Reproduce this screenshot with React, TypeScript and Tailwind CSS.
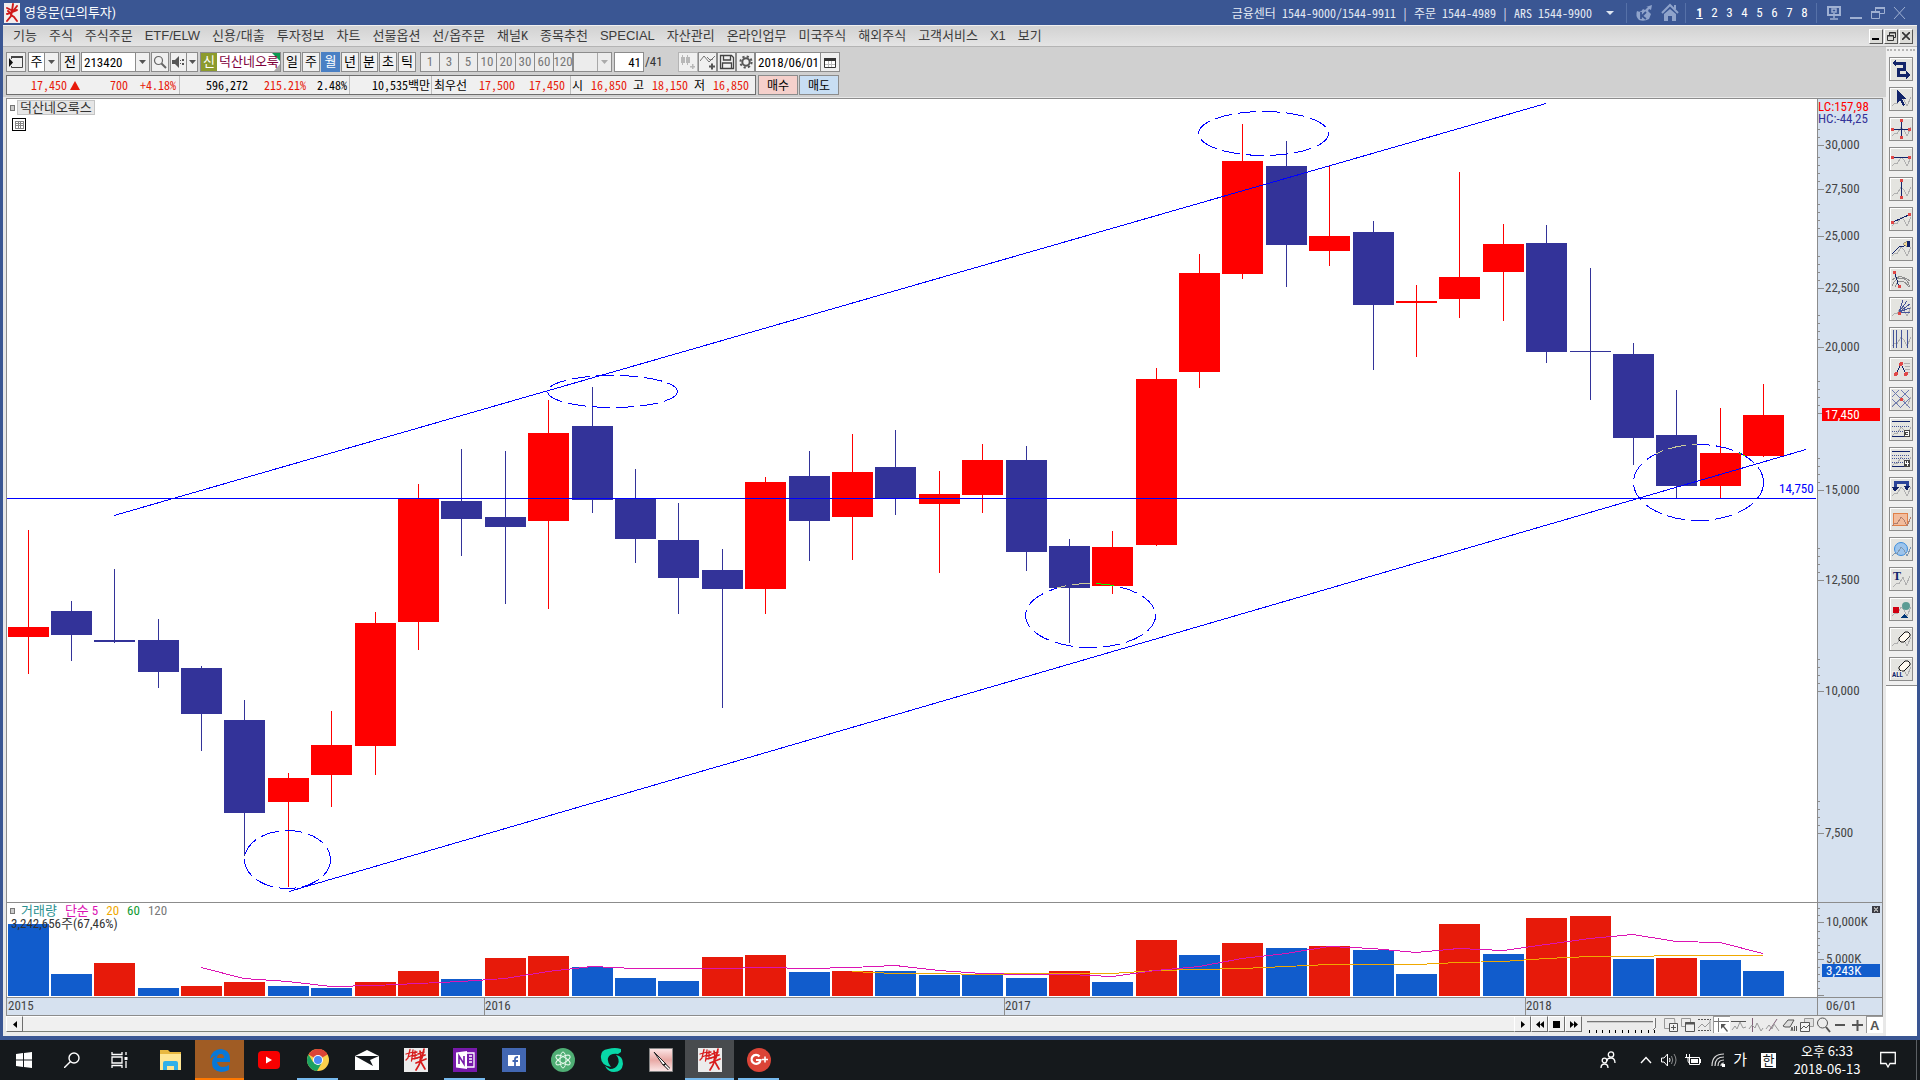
import React from "react";

type Candle = [up: number, high: number, low: number, top: number, bottom: number, volumeTop: number];

const CANDLES: Candle[] = [
  [1, 530, 674, 627, 637, 924], [0, 601, 661, 611, 635, 974], [0, 569, 643, 640, 642, 963],
  [0, 619, 688, 640, 672, 988], [0, 666, 751, 668, 714, 986], [0, 700, 856, 720, 813, 982],
  [1, 773, 887, 778, 802, 986], [1, 711, 807, 745, 775, 988], [1, 612, 775, 623, 746, 982],
  [1, 484, 650, 499, 622, 971], [0, 449, 556, 501, 519, 979], [0, 451, 604, 517, 527, 958],
  [1, 400, 609, 433, 521, 956], [0, 387, 513, 426, 500, 967], [0, 469, 563, 498, 539, 978],
  [0, 503, 614, 540, 578, 981], [0, 549, 708, 570, 589, 957], [1, 477, 614, 482, 589, 955],
  [0, 451, 561, 476, 521, 972], [1, 434, 560, 472, 517, 971], [0, 430, 515, 467, 498, 971],
  [1, 471, 573, 494, 504, 975], [1, 444, 513, 460, 495, 975], [0, 446, 571, 460, 552, 978],
  [0, 539, 643, 546, 588, 971], [1, 531, 594, 547, 586, 982], [1, 368, 546, 379, 545, 940],
  [1, 254, 388, 273, 372, 955], [1, 124, 279, 161, 274, 943], [0, 141, 287, 166, 245, 948],
  [1, 166, 266, 236, 251, 946], [0, 221, 370, 232, 305, 950], [1, 285, 357, 301, 303, 974],
  [1, 172, 318, 277, 299, 924], [1, 224, 321, 244, 272, 954], [0, 225, 363, 243, 352, 918],
  [0, 268, 400, 351, 352, 916], [0, 343, 465, 354, 438, 959], [0, 390, 498, 435, 486, 958],
  [1, 408, 498, 453, 486, 960], [1, 384, 457, 415, 456, 971],
];
const VOLUME_UP = [2, 4, 5, 8, 9, 11, 12, 16, 17, 19, 24, 26, 28, 30, 33, 35, 36, 38];

const centerX = (i: number) => Math.floor(28.04 + 43.39 * i);
const toPoints = (start: number, ys: number[]) => ys.map((y, k) => `${centerX(start + k)},${y + 0.5}`).join(" ");

const MA5 = toPoints(4, [967, 978, 981, 986, 985, 983, 981, 978, 971, 966, 968, 968, 968, 967, 968, 967, 965, 970, 973, 974, 974, 976, 970, 966, 958, 953, 946, 948, 952, 948, 950, 944, 938, 934, 941, 942, 953]);
const MA20 = toPoints(19, [971, 973, 973, 974, 973, 973, 973, 970, 969, 968, 966, 964, 964, 964, 962, 961, 958, 956, 956, 955, 955, 955]);

const ELLIPSES = [
  [287, 859, 43, 29], [612, 391, 65, 16], [1263, 133, 65, 22], [1090, 615, 65, 32], [1698, 482, 65, 38],
];

const PRICE_TICKS: [number, string][] = [
  [145, "30,000"], [189, "27,500"], [236, "25,000"], [288, "22,500"], [347, "20,000"],
  [413, "17,500"], [490, "15,000"], [580, "12,500"], [691, "10,000"], [833, "7,500"],
];

function Ellipses({ color, clip }: { color: string; clip?: string }) {
  return (
    <g fill="none" stroke={color} strokeDasharray="18 6" clipPath={clip}>
      {ELLIPSES.map(([cx, cy, rx, ry]) => (
        <ellipse key={cx} cx={cx + 0.5} cy={cy + 0.5} rx={rx} ry={ry} />
      ))}
    </g>
  );
}

function PricePlot() {
  return (
    <svg className="block h-full w-full" viewBox="7 99 1810 803" preserveAspectRatio="none" shapeRendering="crispEdges" role="img" aria-label="월봉 차트">
      <defs>
        {[0, 1].map((up) => (
          <clipPath key={up} id={up ? "bodies-up" : "bodies-down"}>
            {CANDLES.map((c, i) => c[0] === up && <rect key={i} x={centerX(i) - 20} y={c[3]} width="41" height={c[4] - c[3]} />)}
          </clipPath>
        ))}
      </defs>
      {CANDLES.map(([up, high, low, top, bottom], i) => (
        <g key={i} fill={up ? "#ff0000" : "#333399"}>
          <rect x={centerX(i)} y={high} width="1" height={low - high} />
          <rect x={centerX(i) - 20} y={top} width="41" height={bottom - top} />
        </g>
      ))}
      <Ellipses color="#0000ff" />
      <Ellipses color="#cccc99" clip="url(#bodies-down)" />
      <Ellipses color="#00ff00" clip="url(#bodies-up)" />
      <path d="M114 515.5L1546 103.5M289 891.5L1806 449.5M7 498.5H1816" stroke="#0000ff" fill="none" />
      <text x="1779" y="493" fontSize="13" fill="#0000ff">14,750</text>
    </svg>
  );
}

function PriceAxis() {
  return (
    <svg className="block h-full w-full" viewBox="1818 99 64 803" preserveAspectRatio="none" shapeRendering="crispEdges" fontSize="13">
      <text x="1818" y="111" fill="#ff0000">LC:157,98</text>
      <text x="1818" y="123" fill="#333399">HC:-44,25</text>
      {PRICE_TICKS.map(([y, label]) => (
        <g key={label}>
          <rect x="1818" y={y} width="6" height="1" fill="#8c8c8c" />
          {[8, 16, 24, 32].map((d) => y - d > 126 && <rect key={d} x="1818" y={y - d} width="2" height="1" fill="#8c8c8c" />)}
          <text x="1825" y={y + 4} fill="#444">{label}</text>
        </g>
      ))}
      <rect x="1822" y="408" width="58" height="13" fill="#ff0000" />
      <text x="1825" y="419" fill="#fff">17,450</text>
    </svg>
  );
}

function VolumePlot() {
  return (
    <svg className="block h-full w-full" viewBox="7 903 1810 94" preserveAspectRatio="none" shapeRendering="crispEdges" role="img" aria-label="거래량">
      {CANDLES.map((c, i) => (
        <rect key={i} x={centerX(i) - 20} y={c[5]} width="41" height={996 - c[5]} fill={VOLUME_UP.includes(i) ? "#e71a0a" : "#115ccc"} />
      ))}
      <polyline points={MA20} fill="none" stroke="#f0a800" />
      <polyline points={MA5} fill="none" stroke="#dc14b4" />
    </svg>
  );
}

function VolumeAxis() {
  return (
    <svg className="block h-full w-full" viewBox="1818 903 64 94" preserveAspectRatio="none" shapeRendering="crispEdges" fontSize="13">
      {[908, 915, 931, 938, 945, 952, 967, 974, 981, 988].map((y) => <rect key={y} x="1818" y={y} width="2" height="1" fill="#8c8c8c" />)}
      {[922, 959, 995].map((y) => <rect key={y} x="1818" y={y} width="6" height="1" fill="#8c8c8c" />)}
      <text x="1826" y="926" fill="#444">10,000K</text>
      <text x="1826" y="963" fill="#444">5,000K</text>
      <rect x="1822" y="964" width="58" height="13" fill="#115ccc" />
      <text x="1826" y="975" fill="#fff">3,243K</text>
      <rect x="1872" y="906" width="8" height="7" fill="#3c3c44" />
      <path d="M1874 907.500l4 4m0-4l-4 4" stroke="#aaa" />
    </svg>
  );
}

function DatePlot() {
  return (
    <svg className="block h-full w-full" viewBox="7 998 1810 17" preserveAspectRatio="none" shapeRendering="crispEdges" fontSize="13" fill="#444">
      {[484, 1004, 1525].map((x) => <rect key={x} x={x} y="998" width="1" height="17" fill="#8c8c8c" />)}
      <text x="8" y="1010">2015</text>
      <text x="485" y="1010">2016</text>
      <text x="1005" y="1010">2017</text>
      <text x="1526" y="1010">2018</text>
    </svg>
  );
}

/* ---------- title bar ---------- */

function BrushMark({ className }: { className: string }) {
  return (
    <svg className={className} viewBox="0 0 24 24" fill="none" stroke="#d81c1c" strokeLinecap="round">
      <rect width="24" height="24" fill="#ececec" stroke="none" />
      <path d="M2 6l7-2M6 1.500L4 10l-2 2M4 9l5-2M9 2L7.500 13M9 5l4-1M9 8l4-1M8 11l5-1M11 3v8" strokeWidth="1.300" />
      <path d="M14 6l6-2M16 3l1 5M20 1l-2 9M13 10l8-3M17 7l-1 6M12 15l10-4M17 11l-2 6-3 5M17 14l4 7" strokeWidth="1.700" />
    </svg>
  );
}

function RedFigure() {
  return (
    <svg className="h-5 w-4" viewBox="0 0 16 20" fill="none" stroke="#d01818" strokeLinecap="round">
      <rect width="16" height="20" fill="#f2eeee" stroke="none" />
      <path d="M9 1L8 8M3 5l4 2M13 3l-3 4M3 11l10-4M8 8l-1 5-4 5M7 12l3 2 3 4M4 8l3 3" strokeWidth="1.900" />
    </svg>
  );
}

function TitleBar() {
  return (
    <header className="flex h-[25px] items-center pl-1 text-[#e4eaf4]">
      <RedFigure />
      <h1 className="ml-1 text-[13px] leading-5 text-white">영웅문(모의투자)</h1>
      <p className="ml-auto font-['Noto_Sans_Mono_CJK_KR',monospace] text-xs whitespace-pre">금융센터 1544-9000/1544-9911 | 주문 1544-4989 | ARS 1544-9900</p>
      <button aria-label="연락처" className="ml-[6px] flex h-6 w-6 items-center justify-center">
        <svg className="h-1 w-2" viewBox="0 0 8 4"><path d="M0 0h8L4 4z" fill="#dfe6f2" /></svg>
      </button>
      <span className="ml-1 h-5 w-px bg-[#5671a8]" />
      <button aria-label="키움" className="ml-2">
        <svg className="h-5 w-[18px]" viewBox="0 0 18 20" fill="#8fa3cb"><path d="M2 8q4 2 6-2l2 1 3-3h-2l6-2-1 5-2-1-1 2 3 3-2 5q-5 3-10 1-4-4-2-9z" /><path d="M6 9v7M11 9l-4 4 4 3" stroke="#3a5693" strokeWidth="1.800" fill="none" /></svg>
      </button>
      <button aria-label="홈" className="ml-2">
        <svg className="h-5 w-[18px]" viewBox="0 0 18 20" fill="none" stroke="#8fa3cb"><path d="M1 10L9 2l8 8" strokeWidth="2" /><path d="M9 6l6 5v7h-4v-5H7v5H3v-7z" fill="#8fa3cb" stroke="none" /><path d="M14 2v4" strokeWidth="2" /></svg>
      </button>
      <span className="ml-[6px] h-5 w-px bg-[#5671a8]" />
      <nav aria-label="가상화면" className="ml-[6px] flex">
        {["1", "2", "3", "4", "5", "6", "7", "8"].map((n) => (
          <button key={n} className={n === "1" ? "w-[15px] font-bold text-white underline" : "w-[15px] text-white"}>{n}</button>
        ))}
      </nav>
      <span className="ml-1 h-5 w-px bg-[#5671a8]" />
      <div className="ml-2 mr-[11px] flex gap-1 text-[#9fb0d2]">
        <button aria-label="모니터"><svg className="h-4 w-[18px]" viewBox="0 0 18 16" fill="none" stroke="currentColor" strokeWidth="2"><path d="M3 2h12v8H3z" /><path d="M7 4h4v3H7zM9 8v5M5 14h8" strokeWidth="1.500" /></svg></button>
        <button aria-label="최소화"><svg className="h-4 w-[18px]" viewBox="0 0 18 16" fill="currentColor"><path d="M3 12h12v2H3z" /></svg></button>
        <button aria-label="이전 크기로"><svg className="h-4 w-[18px]" viewBox="0 0 18 16" fill="none" stroke="currentColor"><path d="M6.500 7V2.500h9v6H11M2.500 6.500h8v7h-8z" /><path d="M6 3h10M2 7h9" strokeWidth="2" /></svg></button>
        <button aria-label="닫기"><svg className="h-4 w-[18px]" viewBox="0 0 18 16" fill="none" stroke="currentColor"><path d="M3 2l11 12M14 2L3 14" /></svg></button>
      </div>
    </header>
  );
}

const MENU = ["기능", "주식", "주식주문", "ETF/ELW", "신용/대출", "투자정보", "차트", "선물옵션", "선/옵주문", "채널K", "종목추천", "SPECIAL", "자산관리", "온라인업무", "미국주식", "해외주식", "고객서비스", "X1", "보기"];

function MenuBar() {
  const mdi = "flex h-[15px] w-[14px] items-center justify-center border border-t-white border-l-white border-r-[#555] border-b-[#555] bg-[#dcdcd8]";
  return (
    <nav className="flex h-[22px] items-center border-t border-b border-t-[#f0f0f0] border-b-[#b4b4b4] bg-linear-to-b from-[#d2d2d2] to-[#e4e4e4] pl-[10px] text-[#3c3c3c]">
      <div className="flex gap-3">
        {MENU.map((m) => (
          <button key={m} className={/^[A-Z]/.test(m) ? "font-['Liberation_Sans',sans-serif]" : ""}>{m}</button>
        ))}
      </div>
      <div className="mr-1 ml-auto flex gap-px">
        <button aria-label="창 최소화" className={mdi}><svg className="h-2 w-2" viewBox="0 0 8 8"><path d="M0 6h7v2H0z" /></svg></button>
        <button aria-label="창 복원" className={mdi}><svg className="h-[9px] w-[9px]" viewBox="0 0 9 9" fill="none" stroke="#333"><path d="M2.500 3V.5h6v5H7M.5 3.500h6v5h-6zM2 1h7M0 4h7" /></svg></button>
        <button aria-label="창 닫기" className={mdi}><svg className="h-2 w-2" viewBox="0 0 8 8" stroke="#333" strokeWidth="1.600"><path d="M0 0l8 8M8 0L0 8" /></svg></button>
      </div>
    </nav>
  );
}

/* ---------- top toolbar ---------- */

const BTN = "flex h-5 items-center justify-center border border-[#8c8c8c] bg-[#f0f0f0] ";
const Down = ({ color = "#555" }: { color?: string }) => (
  <svg className="h-1 w-[7px]" viewBox="0 0 7 4"><path d="M0 0h7L3.500 4z" fill={color} /></svg>
);

function SymbolBar() {
  return (
    <div className="flex h-5 items-center text-black">
      <button aria-label="창 목록" className={BTN + "w-[20px]"}>
        <svg className="h-4 w-4" viewBox="0 0 16 16" fill="none" stroke="#444"><path d="M3.500 5V2.500h11v11h-11V12" /><path d="M3 3h12" strokeWidth="2" /><path d="M1 4v9l4-4.500z" fill="#111" stroke="none" /></svg>
      </button>
      <button className="ml-[2px] flex h-5 w-[17px] items-center justify-center border border-[#8c8c8c] bg-white">주</button>
      <button aria-label="구분 선택" className={BTN + "w-[14px] border-l-0"}><Down /></button>
      <button className={BTN + "ml-px w-[20px]"}>전</button>
      <input aria-label="종목코드" defaultValue="213420" className="ml-px h-5 w-[55px] border border-[#8c8c8c] bg-white px-[2px]" />
      <button aria-label="종목 목록" className={BTN + "w-[14px] border-l-0"}><Down /></button>
      <button aria-label="검색" className={BTN + "ml-px w-[18px]"}>
        <svg className="h-[14px] w-[14px]" viewBox="0 0 14 14" fill="none" stroke="#666"><circle cx="5.500" cy="5.500" r="4" strokeWidth="1.200" /><path d="M8.500 8.500L13 13" strokeWidth="2" /></svg>
      </button>
      <button aria-label="소리" className={BTN + "ml-px w-[17px]"}>
        <svg className="h-3 w-[14px]" viewBox="0 0 14 12" fill="#555"><path d="M0 4h3l4-4v12L3 8H0zM8 4h1v1H8zM8 7h1v1H8zM10 3h2v2h-2zM10 7h2v2h-2z" /></svg>
      </button>
      <button aria-label="소리 옵션" className={BTN + "w-[11px] border-l-0"}><Down /></button>
      <div className="relative ml-[2px] flex h-5 w-[81px] items-center border border-[#8c8c8c] bg-white whitespace-nowrap text-[#80003c]">
        <span className="flex h-[18px] w-4 shrink-0 items-center justify-center bg-[#8c9b2d] text-white">신</span>
        <svg className="absolute top-0 right-0 h-[18px] w-2" viewBox="0 0 8 18"><path d="M0 0h8v8z" fill="#0a9a50" /><path d="M8 11v7H2z" fill="#aaa" /></svg>
        <span className="relative ml-[2px]">덕산네오룩</span>
      </div>
      <div className="ml-[2px] flex gap-px">
        {["일", "주", "월", "년", "분", "초", "틱"].map((t) => (
          <button key={t} className={t === "월" ? "flex h-5 w-[19px] items-center justify-center bg-[#4a80c4] text-white" : "flex h-5 w-[18px] items-center justify-center border border-[#8c8c8c] bg-[#f0f0f0]"}>{t}</button>
        ))}
      </div>
      <div className="ml-1 flex border-l border-[#8c8c8c]">
        {["1", "3", "5", "10", "20", "30", "60", "120"].map((t) => (
          <button key={t} className="flex h-5 w-[19px] items-center justify-center border border-l-0 border-[#8c8c8c] bg-[#ececec] text-[#777]">{t}</button>
        ))}
      </div>
      <button aria-label="분 선택" className="flex h-5 w-[39px] items-center justify-end border border-[#8c8c8c] bg-[#ececec]">
        <span className="flex h-full w-[14px] items-center justify-center border-l border-[#a8a8a8]"><Down color="#aaa" /></span>
      </button>
      <input aria-label="봉 개수" defaultValue="41" className="ml-[2px] h-5 w-[30px] border border-[#8c8c8c] bg-white px-[2px] text-right" />
      <span className="ml-px text-[#333]">/41</span>
      <button aria-label="종목 추가" className="ml-auto flex h-5 w-[20px] items-center justify-center border border-[#b4b4b4] bg-[#f0f0f0]">
        <svg className="h-4 w-4" viewBox="0 0 16 16" fill="#b8b8b8"><path d="M1 3h4v6H1zM3 1v10h-1V1zM6 3h4v6H6zM8 1v10h-1V1zM10 12h5v1.500h-5zM12 10h1.500v5H12z" /></svg>
      </button>
      <button aria-label="지표 추가" className={BTN + "w-[19px]"}>
        <svg className="h-4 w-4" viewBox="0 0 16 16" fill="none" stroke="#555"><path d="M0 7l4-5 5 6 6-6M7 3l3 3 3-1" strokeWidth=".8" /><path d="M9 12.500h6M12 9.500v6" strokeWidth="2" /></svg>
      </button>
      <button aria-label="저장" className={BTN + "w-[19px]"}>
        <svg className="h-4 w-4" viewBox="0 0 16 16" fill="none" stroke="#444" strokeWidth="1.300"><path d="M1.500 1.500h11l2 2v11h-13zM4.500 2v4h7V2M3.500 14V9h9v5" /></svg>
      </button>
      <button aria-label="설정" className={BTN + "w-[19px]"}>
        <svg className="h-[14px] w-[14px]" viewBox="0 0 14 14" fill="none" stroke="#555"><circle cx="7" cy="7" r="3.700" strokeWidth="2" /><circle cx="7" cy="7" r="5.600" strokeWidth="2" strokeDasharray="2.200 2.200" /></svg>
      </button>
      <input aria-label="날짜" defaultValue="2018/06/01" className="h-5 w-[66px] border border-[#8c8c8c] bg-white px-[2px]" />
      <button aria-label="달력" className={BTN + "w-[19px] border-l-0"}>
        <svg className="h-[11px] w-3" viewBox="0 0 12 11"><path d="M.5 1.500h11v9H.5z" fill="#fff" stroke="#333" /><path d="M0 1h12v3H0z" fill="#333" /><path d="M1 7.500h10M4.500 4v6M7.500 4v6" stroke="#bbb" /></svg>
      </button>
    </div>
  );
}

function QuoteBar() {
  const num = "text-right text-[#e71a0a] ";
  return (
    <div className="mt-[3px] flex h-5 items-center font-['Noto_Sans_Mono_CJK_KR',monospace] text-xs whitespace-nowrap text-black">
      <div className="flex h-5 w-[750px] items-center border border-[#6e6e6e] bg-[#f0f0f0]">
        <div className="flex h-full w-[173px] items-center border-r border-[#bbb]">
          <span className={num + "w-[60px]"}>17,450</span>
          <svg className="ml-[3px] h-[9px] w-[10px]" viewBox="0 0 10 9"><path d="M5 0l5 9H0z" fill="#e71a0a" /></svg>
          <span className={num + "w-[48px]"}>700</span>
          <span className={num + "w-[48px]"}>+4.18%</span>
        </div>
        <div className="flex h-full w-[170px] items-center border-r border-[#bbb]">
          <span className="w-[68px] text-right">596,272</span>
          <span className={num + "w-[58px]"}>215.21%</span>
          <span className="w-[41px] text-right">2.48%</span>
        </div>
        <div className="flex h-full w-[82px] items-center justify-end border-r border-[#bbb] pr-px">10,535백만</div>
        <div className="flex h-full w-[139px] items-center border-r border-[#bbb]">
          <span className="ml-[2px] w-9">최우선</span>
          <span className={num + "w-[45px]"}>17,500</span>
          <span className={num + "w-[50px]"}>17,450</span>
        </div>
        <span className="ml-px w-[12px]">시</span>
        <span className={num + "w-[43px]"}>16,850</span>
        <span className="ml-[6px] w-[12px]">고</span>
        <span className={num + "w-[43px]"}>18,150</span>
        <span className="ml-[6px] w-[12px]">저</span>
        <span className={num + "w-[43px]"}>16,850</span>
      </div>
      <button className="ml-[2px] h-5 w-[40px] border border-[#8c8c8c] bg-[#f5d0cb]">매수</button>
      <button className="ml-px h-5 w-[40px] border border-[#8c8c8c] bg-[#c8def3]">매도</button>
    </div>
  );
}

/* ---------- drawing tools ---------- */

const WAVE = "M1 17l3-3 2 1 4-7 3 3 3 6 4-9";
const RED = "#e04848";
const NAVY = "#12246a";
const dot = (x: number, y: number) => <rect x={x - 1} y={y - 1} width="3" height="3" fill={RED} stroke="none" />;

const TOOLS: [string, React.ReactNode][] = [
  ["전환", <><path d="M4 4h9v6H7v6h8" stroke={NAVY} strokeWidth="3" /><path d="M5 0v8L1 4zM15 12v8l4-4z" fill={NAVY} stroke="none" /></>],
  ["선택", <><path d={WAVE} stroke="#b0b0b0" /><path d="M6 1v13l3-3 3 6 2-1-3-6h5z" fill={NAVY} stroke="none" /></>],
  ["십자선", <><path d={WAVE} stroke="#b0b0b0" /><path d="M10.500 1v18M1 10.500h18" stroke={NAVY} />{dot(10, 1)}{dot(10, 18)}{dot(1, 10)}{dot(18, 10)}</>],
  ["수평선", <><path d={WAVE} stroke="#b0b0b0" /><path d="M1 8.500h18" stroke={NAVY} />{dot(1, 8)}{dot(18, 8)}</>],
  ["수직선", <><path d={WAVE} stroke="#b0b0b0" /><path d="M10.500 1v18" stroke={NAVY} />{dot(10, 1)}{dot(10, 18)}</>],
  ["추세선", <><path d={WAVE} stroke="#b0b0b0" /><path d="M1 13.500l18-8" stroke={NAVY} />{dot(1, 13)}{dot(18, 5)}</>],
  ["연속선", <><path d={WAVE} stroke="#b0b0b0" /><path d="M1 15l8-8h4l4-3" stroke={NAVY} /><path d="M12 5l4-3v6z" fill="#f4d890" stroke="#555" strokeWidth=".5" /><path d="M16 2h3v6h-3z" fill={NAVY} stroke="none" /></>],
  ["아크", <><path d="M1 17q3-8 9-8t9 9M4 18q2-6 6-6t8 6M1 11q8-7 18 1" stroke="#909090" /><path d="M4 4l4 14" stroke={NAVY} />{dot(3, 3)}{dot(8, 17)}</>],
  ["팬", <><path d={WAVE} stroke="#b0b0b0" /><path d="M8 13l4-12M8 13l8-11M8 13l11-8M8 13l11-4M8 13h11" stroke="#45559a" />{dot(8, 14)}</>],
  ["시간선", <><path d={WAVE} stroke="#b0b0b0" /><path d="M2.500 1v18M5.500 1v18M10.500 1v18M16.500 1v18" stroke="#45559a" /></>],
  ["파동", <><path d="M5 15l5-10 5 10" stroke={NAVY} /><path d="M13 4.500h6M14 7.500h5M14 10.500h5M16 13.500h3" stroke="#b0b0b0" /><g fill={RED} stroke="none"><circle cx="10" cy="5" r="2" /><circle cx="5" cy="15" r="2" /><circle cx="15" cy="15" r="2" /></g></>],
  ["갠그리드", <><path d={WAVE} stroke="#b0b0b0" /><path d="M1 8l7-7M1 18L18 1M9 19l10-10M1 1l18 18M10 1l9 9M1 10l9 9" stroke="#6b78b0" />{dot(10, 10)}</>],
  ["삼등분선", <><path d={WAVE} stroke="#b0b0b0" /><path d="M1 2.500h18M1 17.500h18" stroke={NAVY} /><path d="M1 7.500h18M1 12.500h18" stroke="#45559a" strokeDasharray="1 1" /><rect x="13" y="11" width="6" height="7" fill="#444" stroke="none" /><path d="M14 12.500h3.500v4H14M15 14.500h2" stroke="#fff" /></>],
  ["사등분선", <><path d={WAVE} stroke="#b0b0b0" /><path d="M1 2.500h18M1 17.500h18" stroke={NAVY} /><path d="M1 6.500h18M1 9.500h18M1 13.500h18" stroke="#45559a" strokeDasharray="1 1" /><rect x="13" y="11" width="6" height="7" fill="#444" stroke="none" /><path d="M14.500 12v2.500H18M16.500 12v5" stroke="#fff" /></>],
  ["되돌림", <><path d={WAVE} stroke="#b0b0b0" /><path d="M4 9V3h12v5" stroke="#2a4398" strokeWidth="3" /><path d="M1 8h7l-4 5zM13 7h6l-3 5z" fill={NAVY} stroke="none" /></>],
  ["사각형", <><rect x="2.500" y="4.500" width="14" height="12" fill="#f2bc9c" stroke="#e08048" /><path d={WAVE} stroke="#b08070" /></>],
  ["원", <><circle cx="10" cy="10" r="6.500" fill="#9cc4ec" stroke="#3c8cdc" shapeRendering="auto" /><path d={WAVE} stroke="#8098b0" /></>],
  ["문자", <><path d="M2 18l4-4 2 1 4-7 3 8 4-9" stroke="#b0b0b0" /><text x="2" y="11" fontFamily="Liberation Serif" fontWeight="700" fontSize="12" fill={NAVY} stroke="none">T</text></>],
  ["도형", <><path d={WAVE} stroke="#b0b0b0" /><rect x="2" y="8" width="6" height="6" fill="#d00010" stroke="none" /><circle cx="15" cy="7" r="4" fill="#5c9c94" stroke="none" shapeRendering="auto" /><path d="M9 19l4-4 4 4z" fill="#003878" stroke="none" /></>],
  ["지우개", <><path d={WAVE} stroke="#b0b0b0" /><path d="M8 9l6-6h3l2 2v2l-6 6h-3l-2-2z" fill="#fffaf0" stroke="#111" shapeRendering="auto" /></>],
  ["전체 지우기", <><path d={WAVE} stroke="#b0b0b0" /><path d="M8 8l6-6h3l2 2v2l-6 6h-3l-2-2z" fill="#fffaf0" stroke="#111" shapeRendering="auto" /><path d="M1 12h10v7H1z" fill="#f0f0ec" /><text x="1" y="18" fontFamily="Roboto Condensed" fontWeight="700" fontSize="7" fill={NAVY} stroke="none">ALL</text></>],
];

function DrawingTools() {
  return (
    <aside className="flex w-[31px] shrink-0 flex-col bg-white">
      <div className="flex flex-col items-center gap-[6px] border-b border-[#8c8c8c] bg-[#f0f0f0] pt-[2px] pr-px pb-1">
        <span className="h-[2px] w-7 border-t-2 border-dotted border-[#b4b4b4]" />
        {TOOLS.map(([name, art]) => (
          <button key={name} aria-label={name} className="flex h-6 w-6 items-center justify-center border border-[#8c8c8c] bg-[#e4e4e0] shadow-[inset_1px_1px_0_white]">
            <svg className="h-5 w-5" viewBox="0 0 20 20" fill="none" shapeRendering="crispEdges">{art}</svg>
          </button>
        ))}
      </div>
    </aside>
  );
}

/* ---------- scroll row ---------- */

const VIEW_TOOLS: [string, React.ReactNode][] = [
  ["새 창", <><path d="M1.500 1.500h10l1 10h-11z" stroke="#999" /><path d="M6.500 6.500h8v8h-8z" fill="#f0f0f0" /><path d="M10.500 8v5M8 10.500h5" /></>],
  ["창 겹치기", <><path d="M1.500 1.500h9v8h-9z" stroke="#999" /><path d="M5.500 5.500h9v9h-9z" fill="#f0f0f0" /><path d="M5 6.500h10" strokeWidth="2" /></>],
  ["영역", <><path d="M1 2.500h13M1 13.500h13" strokeDasharray="2 1" /><path d="M1 11l4-4 3 3 5-5M13 3v10" stroke="#999" /></>],
  ["십자", <><path d="M0 4.500h15M4.500 1v14" stroke="#777" /><path d="M7 7h5L10 9l4 5-1 1-4-5-2 2z" fill="#555" stroke="none" /></>],
  ["수평", <><path d="M0 4.500h15" /><path d="M1 13l3-4 2 3 3-7 3 6 3-1" stroke="#999" /></>],
  ["수직", <><path d="M4.500 1v14" stroke="#806078" /><path d="M1 12l3-4 3 3 2-5 4 8 2-3" stroke="#999" /></>],
  ["추세", <><path d="M4 14l8-12" stroke="#806078" /><path d="M1 12l3-4 3 4 2-5 5 7" stroke="#999" /></>],
  ["모두 지우기", <><path d="M1 9l5-6h6l-4 7H3z" fill="#ddd" /><path d="M9 14l1-4 1 4M12.500 9v5M14.500 9v5" /></>],
  ["차트 복사", <><path d="M5.500 1.500h9v8h-9z" stroke="#999" fill="#e0e0e0" /><path d="M1.500 5.500h9v9h-9z" fill="#f4f4f4" /><path d="M2 12l3-3 2 2 3-3" /></>],
  ["돋보기", <><circle cx="6.500" cy="6" r="5" /><path d="M10 10l4 5" strokeWidth="2" /></>],
  ["축소", <path d="M2 8h10" strokeWidth="2" />],
  ["확대", <path d="M2 8h11M7.500 3v11" strokeWidth="2" />],
  ["자동", <text x="3" y="13" fontFamily="Liberation Sans" fontWeight="700" fontSize="13" fill="#555" stroke="none">A</text>],
];

function ScrollRow() {
  const b = "flex h-4 w-[17px] items-center justify-center border border-t-white border-l-white border-r-[#6e6e6e] border-b-[#6e6e6e] bg-[#f0f0f0]";
  return (
    <div className="flex h-5 shrink-0 items-start bg-[#ececec]">
      <button aria-label="왼쪽으로" className={b}><svg className="h-[7px] w-1" viewBox="0 0 4 7"><path d="M4 0v7L0 3.500z" /></svg></button>
      <div className="h-4 flex-1 border-t border-b border-t-white border-b-[#7c8078] bg-[#f0f0f0]" />
      <button aria-label="오른쪽으로" className={b}><svg className="h-[7px] w-1" viewBox="0 0 4 7"><path d="M0 0v7l4-3.500z" /></svg></button>
      <button aria-label="뒤로" className={b}><svg className="h-[7px] w-2" viewBox="0 0 8 7"><path d="M4 0v7L0 3.500zM8 0v7L4 3.500z" /></svg></button>
      <button aria-label="정지" className={b}><svg className="h-[7px] w-[7px]" viewBox="0 0 7 7"><path d="M0 0h7v7H0z" /></svg></button>
      <button aria-label="앞으로" className={b}><svg className="h-[7px] w-2" viewBox="0 0 8 7"><path d="M0 0v7l4-3.500zM4 0v7l4-3.500z" /></svg></button>
      <label className="relative ml-1 h-[18px] w-[76px]">
        <input type="range" aria-label="확대 비율" defaultValue={100} className="absolute inset-0 h-full w-full cursor-pointer opacity-0" />
        <svg className="pointer-events-none block h-[18px] w-[76px]" viewBox="0 0 76 18" shapeRendering="crispEdges">
          <path d="M1 5h66v1H1z" fill="#777" /><path d="M1 6h66v1H1z" fill="#ccc" />
          <path d="M67 2h3v9l-1 3h-2z" fill="#f4f4f4" /><path d="M69.500 2v9l-2 3" fill="none" stroke="#777" />
          {[0, 1, 2, 3, 4, 5, 6, 7, 8, 9, 10].map((k) => <rect key={k} x={Math.round(3 + k * 6.5)} y="14" width="1" height="3" />)}
        </svg>
      </label>
      <div className="flex">
        {VIEW_TOOLS.map(([name, art]) => (
          <button key={name} aria-label={name} className={name === "십자" || name === "자동" ? "flex h-[17px] w-[17px] items-center justify-center border-t border-l border-[#999] bg-white" : "flex h-[17px] w-[17px] items-center justify-center"}>
            <svg className="h-4 w-4" viewBox="0 0 16 16" fill="none" stroke="#555">{art}</svg>
          </button>
        ))}
      </div>
    </div>
  );
}

/* ---------- taskbar ---------- */

const APPS: [string, string, React.ReactNode][] = [
  ["파일 탐색기", "", <svg className="h-[22px] w-6" viewBox="0 0 24 22"><path d="M1 1h8l2 2h11v18H1z" fill="#e8b840" /><path d="M1 5h21v16H1z" fill="#ffe694" /><path d="M4 21v-7q0-2 2-2h11q2 0 2 2v7h-4v-4H8v4z" fill="#30b0e8" /></svg>],
  ["Edge", "hot", <svg className="h-6 w-6" viewBox="0 0 24 24"><path d="M2 11Q4 1 13 1q9 1 9 10v3H9q1 5 6 5 3 0 6-2v5q-4 2-8 2-9-1-9-9 0-6 5-8Q5 8 2 11zM9 10h7q0-4-3-4-4 0-4 4z" fill="#0878d8" /></svg>],
  ["YouTube", "", <svg className="h-5 w-[22px]" viewBox="0 0 22 20"><rect y="1" width="22" height="18" rx="4" fill="#f60000" /><path d="M8 6.500v7l6-3.500z" fill="#fff" /></svg>],
  ["Chrome", "open", <svg className="h-[22px] w-[22px]" viewBox="0 0 22 22"><circle cx="11" cy="11" r="11" fill="#fcd04b" /><path d="M11 11L1.500 5.500A11 11 0 0 1 20.500 5.500z" fill="#dc4437" /><path d="M11 0a11 11 0 0 1 9.500 5.500H11z" fill="#dc4437" /><path d="M1.500 5.500A11 11 0 0 0 10 22l5-8.500L6 13z" fill="#1ba261" /><circle cx="11" cy="11" r="5" fill="#fff" /><circle cx="11" cy="11" r="4" fill="#4c8bf5" /></svg>],
  ["메일", "", <svg className="h-[20px] w-6" viewBox="0 0 24 20"><path d="M0 6l12-6 12 6v14H0z" fill="#fff" /><path d="M0 6h24l-9 4 3 6L0 6z" fill="#14181c" /></svg>],
  ["영웅문", "", <BrushMark className="h-6 w-6" />],
  ["OneNote", "open", <svg className="h-6 w-6" viewBox="0 0 24 24"><path d="M0 0h24v24H0z" fill="#7719aa" /><path d="M14 5h7v14h-7M16 8h3M16 11h3M16 14h3" fill="none" stroke="#fff" strokeWidth="1.300" /><path d="M3 4.500L14 3v18L3 19.500z" fill="#fff" /><path d="M6 16V8l5 8V8" fill="none" stroke="#7719aa" strokeWidth="1.600" /></svg>],
  ["Facebook", "", <svg className="h-6 w-6" viewBox="0 0 24 24"><path d="M0 0h24v24H0z" fill="#4267b2" /><path d="M6 7h12v11H6z" fill="#fff" /><path d="M13 18v-7q0-2 3-2M10.500 13H16" fill="none" stroke="#4267b2" strokeWidth="1.800" /></svg>],
  ["Atom", "", <svg className="h-6 w-6" viewBox="0 0 24 24" fill="none" stroke="#e4f8ea"><circle cx="12" cy="12" r="12" fill="#4fae74" stroke="none" /><ellipse cx="12" cy="12" rx="3" ry="8" /><ellipse cx="12" cy="12" rx="3" ry="8" transform="rotate(60 12 12)" /><ellipse cx="12" cy="12" rx="3" ry="8" transform="rotate(120 12 12)" /></svg>],
  ["동기화", "", <svg className="h-6 w-6" viewBox="0 0 24 24"><path d="M21 1v3l-3 2q-8-1-10 4-1 4 3 9-10-2-10-9Q0 2 8 1q7-2 13 0z" fill="#08d8a8" /><path d="M5 18l5 3q6 0 8-5 2-5-2-9 7 1 7 9-1 8-9 8-6 0-9-6z" fill="#08d8a8" /></svg>],
  ["편집기", "", <svg className="h-6 w-6" viewBox="0 0 24 24"><defs><linearGradient id="pinkFade" x1="0" y1="0" x2="0" y2="1"><stop stopColor="#fce8e8" /><stop offset=".5" stopColor="#e8a8a4" /><stop offset="1" stopColor="#fce8e8" /></linearGradient></defs><path d="M.5.5h23v23H.5z" fill="url(#pinkFade)" stroke="#888" /><path d="M5 4l12 12-3 1z" fill="#fff" stroke="#222" /><path d="M15 16l5 5" stroke="#111" strokeWidth="3" /><path d="M16 17l4 4" stroke="#fff" strokeWidth="1.400" /></svg>],
  ["영웅문 모의투자", "active", <BrushMark className="h-6 w-6" />],
  ["Google+", "open", <svg className="h-6 w-6" viewBox="0 0 24 24" fill="none" stroke="#fff"><circle cx="12" cy="12" r="12" fill="#db4437" stroke="none" /><path d="M12.500 8.500A4.500 4.500 0 1 0 13.500 12H9" strokeWidth="2.200" /><path d="M15 11.500h6M18 8.500v6" strokeWidth="1.600" /></svg>],
];

function Taskbar() {
  const plain = "flex h-full w-12 items-center justify-center";
  return (
    <footer className="flex h-10 shrink-0 items-center bg-[#15191c] text-white">
      <button aria-label="시작" className={plain}><svg className="h-4 w-4" viewBox="0 0 16 16" fill="#fff"><path d="M0 2l7-1v6.500H0zM8 1l8-1v7.500H8zM0 8.500h7V15l-7-1zM8 8.500h8V16l-8-1z" /></svg></button>
      <button aria-label="검색" className={plain}><svg className="h-4 w-4" viewBox="0 0 16 16" fill="none" stroke="#fff" strokeWidth="1.400"><circle cx="10" cy="6" r="5" /><path d="M6.500 9.500L0 16" /></svg></button>
      <button aria-label="작업 보기" className={plain}><svg className="h-4 w-[18px]" viewBox="0 0 18 16" fill="none" stroke="#fff" strokeWidth="1.300"><path d="M1 0v2.500h10V0M1 5h10v6H1zM1 16v-2.500h10V16M15 0v3M15 9v7" /><path d="M13.500 5h3v3h-3z" fill="#fff" stroke="none" /></svg></button>
      <div className="ml-[2px] flex h-full">
        {APPS.map(([name, state, art]) => (
          <button
            key={name}
            aria-label={name}
            className={
              state === "hot"
                ? "flex h-full w-[49px] items-center justify-center border-y-2 border-t-[#a05c24] border-b-[#ff7800] bg-[#a05c24]"
                : state === "active"
                  ? "flex h-full w-[49px] items-center justify-center border-y-2 border-t-[#484b4e] border-b-[#76b9ed] bg-[#484b4e]"
                  : state === "open"
                    ? "mx-1 flex h-full w-[41px] items-center justify-center border-y-2 border-t-transparent border-b-[#76b9ed]"
                    : "flex h-full w-[49px] items-center justify-center"
            }
          >
            {art}
          </button>
        ))}
      </div>
      <div className="ml-auto flex h-full items-center">
        <button aria-label="피플" className="mr-6"><svg className="h-[18px] w-4" viewBox="0 0 16 18" fill="none" stroke="#fff" strokeWidth="1.300"><circle cx="11" cy="3.500" r="2.700" /><circle cx="4.500" cy="9.500" r="2.300" /><path d="M7 10q0-3 4-3 4 0 4 5M1 17q0-4 3.500-4T8 17" /></svg></button>
        <button aria-label="숨겨진 아이콘" className="mr-[9px]"><svg className="h-2 w-3" viewBox="0 0 12 8" fill="none" stroke="#fff" strokeWidth="1.400"><path d="M1 7l5-5.500L11 7" /></svg></button>
        <button aria-label="볼륨" className="mr-2"><svg className="h-[14px] w-4" viewBox="0 0 16 14" fill="none" stroke="#fff"><path d="M.5 5h2.500l3.500-4v12L3 9H.5z" /><path d="M8.500 5q1 2 0 4" /><path d="M10.500 3q2.500 4 0 8M13 1q4 6 0 12" stroke="#8a8c8e" /></svg></button>
        <button aria-label="배터리" className="mr-[10px]"><svg className="h-3 w-4" viewBox="0 0 16 12" fill="none" stroke="#fff"><path d="M4.500 3.500h10v7h-10z" /><path d="M6 5h7v4H6zM15 5h1v4h-1z" fill="#fff" stroke="none" /><path d="M1.500 0v3M4.500 0v3M0 3.500h6M3 4v3q0 2 2 2" /></svg></button>
        <button aria-label="네트워크" className="mr-[8px]"><svg className="h-[14px] w-[14px]" viewBox="0 0 14 14" fill="none" stroke="#d8d8d8" strokeWidth="1.200"><path d="M1 13Q1 1 13 1M4 13q0-9 9-9M7 13q0-6 6-6M10 13q0-3 3-3" /><path d="M11 11h3v3h-3z" fill="#fff" stroke="none" /></svg></button>
        <button className="mr-[14px] text-[15px] leading-4">가</button>
        <button className="flex h-[15px] w-[15px] items-center justify-center bg-white text-[13px] leading-[15px] text-[#15191c]">한</button>
        <time className="w-[102px] text-center font-['Noto_Sans_CJK_KR',sans-serif] text-[13px] leading-[18px]" dateTime="2018-06-13T18:33">오후 6:33<br />2018-06-13</time>
        <button aria-label="알림" className="flex w-5 justify-center"><svg className="h-[18px] w-4" viewBox="0 0 16 18" fill="none" stroke="#fff" strokeWidth="1.300"><path d="M.7 1.500h14.600v11H10L8 16l-2-3.500H.7z" /></svg></button>
        <span className="mr-[3px] ml-[18px] h-full w-px bg-[#5c6064]" />
      </div>
    </footer>
  );
}

export default function App() {
  return (
    <div className="flex h-screen min-h-[800px] flex-col bg-[#3a5693] font-['Roboto_Condensed','Noto_Sans_CJK_KR',sans-serif] text-[13px] leading-4">
      <TitleBar />
      <main className="mx-[3px] mb-1 flex min-h-0 flex-1 flex-col">
        <MenuBar />
        <div className="flex min-h-0 flex-1">
          <div className="flex min-w-0 flex-1 flex-col bg-[#e8e8e8]">
            <div className="h-[50px] bg-[#d0d0d0] pt-[5px] pl-[3px]">
              <div className="w-[834px]">
                <SymbolBar />
                <QuoteBar />
              </div>
            </div>
            <section className="mt-px mr-[3px] ml-[3px] flex min-h-0 flex-1 flex-col border-t border-[#8c8c8c]">
              <div className="relative flex min-h-0 flex-1 border-r border-l border-[#8c8c8c] bg-white">
                <div className="min-w-0 flex-1"><PricePlot /></div>
                <div className="w-[65px] border-l border-[#8c8c8c] bg-[#d6e1ef]"><PriceAxis /></div>
                <div className="absolute top-px left-[3px] flex items-center gap-[2px]">
                  <span className="h-[6px] w-[5px] border border-[#777] bg-[#ccc]" />
                  <span className="h-[15px] border border-[#c4c4c4] bg-[#e6e6e6] px-[2px] leading-[13px] text-[#333]">덕산네오룩스</span>
                </div>
                <button aria-label="표 보기" className="absolute top-[19px] left-[5px]">
                  <svg className="block h-[13px] w-[14px]" viewBox="0 0 14 13" shapeRendering="crispEdges"><path d="M0 0h14v13H0z" /><path d="M1 1h12v11H1z" fill="#fff" /><path d="M3 3h9v8H3z" fill="#888" /><path d="M4 4h2v1H4zM7 4h1v1H7zM9 4h2v1H9zM4 6h2v1H4zM7 6h1v1H7zM9 6h2v1H9zM4 8h2v2H4zM7 8h1v2H7zM9 8h2v2H9z" fill="#fff" /></svg>
                </button>
              </div>
              <div className="relative flex h-[95px] border border-b-0 border-[#8c8c8c] bg-white">
                <div className="min-w-0 flex-1"><VolumePlot /></div>
                <div className="w-[65px] border-l border-[#8c8c8c] bg-[#d6e1ef]"><VolumeAxis /></div>
                <div className="absolute top-0 left-[3px] text-[#333]">
                  <p className="flex items-center">
                    <span className="mr-[6px] h-[6px] w-[5px] border border-[#777] bg-[#ccc]" />
                    <span className="mr-2 text-[#2a9090]">거래량</span>
                    <span className="mr-2 text-[#dc14b4]">단순 5</span>
                    <span className="mr-2 text-[#f0a800]">20</span>
                    <span className="mr-2 text-[#109a30]">60</span>
                    <span className="text-[#777]">120</span>
                  </p>
                  <p className="-mt-[3px] pl-px">3,242,656주(67,46%)</p>
                </div>
              </div>
              <div className="flex h-[19px] border border-[#8c8c8c] bg-[#d6e1ef]">
                <div className="min-w-0 flex-1"><DatePlot /></div>
                <div className="w-[65px] border-l border-[#8c8c8c] pl-2 leading-[15px] text-[#444]">06/01</div>
              </div>
              <ScrollRow />
            </section>
          </div>
          <DrawingTools />
        </div>
      </main>
      <Taskbar />
    </div>
  );
}
